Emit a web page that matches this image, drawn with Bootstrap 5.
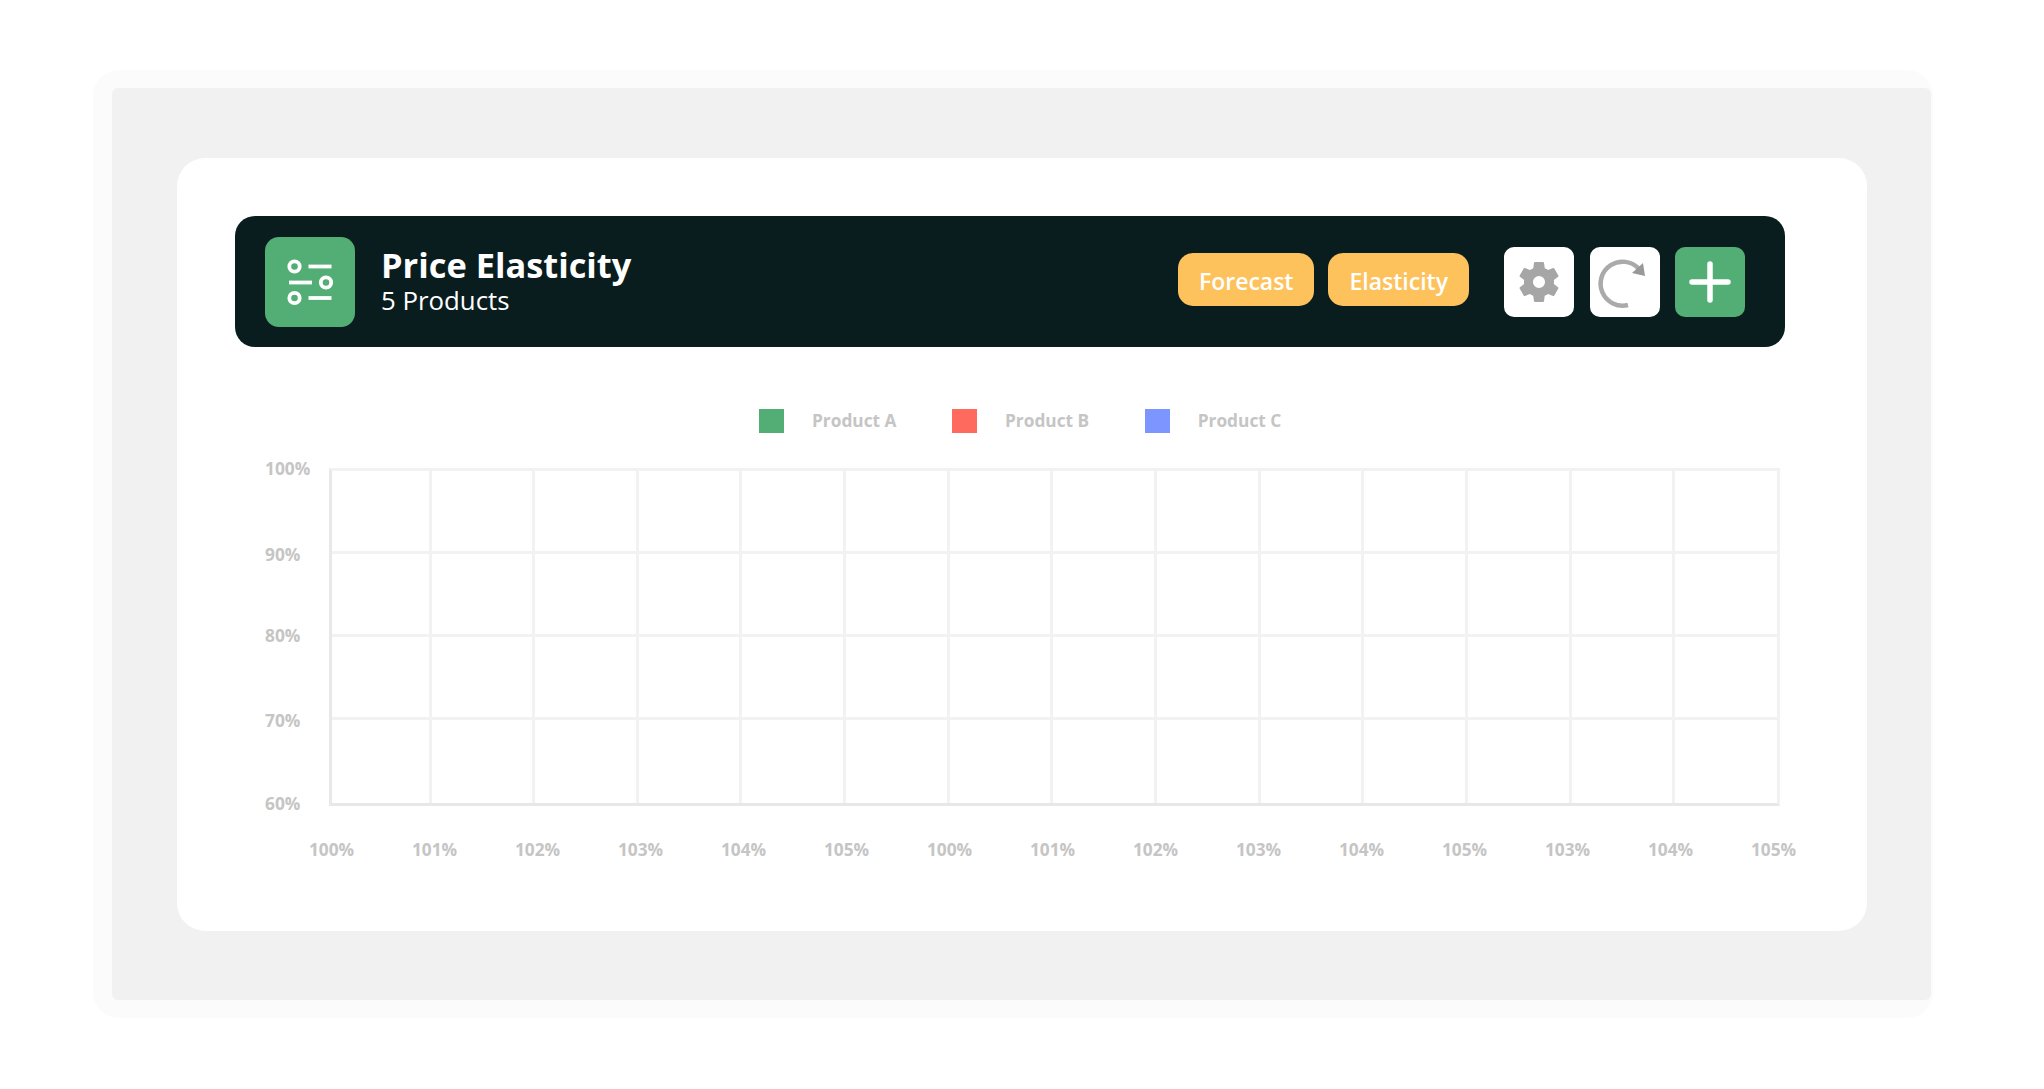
<!DOCTYPE html>
<html lang="en">
<head>
<meta charset="utf-8">
<title>Price Elasticity</title>
<link rel="stylesheet" href="https://cdn.jsdelivr.net/npm/bootstrap@5.3.0/dist/css/bootstrap.min.css">
<style>
html,body{margin:0;height:1089px;overflow:hidden;background:#fff;font-family:"Open Sans","Noto Sans",sans-serif}
.halo{margin:70px 0 0 93px;width:1840px;height:948px;padding:18px 2px 18px 19px;background:#fbfbfb;border-radius:26px}
.panel{height:100%;padding:70px 64px 69px 65px;background:#f1f1f1;border-radius:6px}
.sheet{height:100%;padding:58px 82px 0 58px;background:#fff;border-radius:28px}
.topbar{height:131px;padding:0 40px 0 30px;background:#0a1d1e;border-radius:20px;color:#fff}
.logo-box{width:90px;height:90px;background:#52ae74;border-radius:14px;margin-right:26px}
.logo-box svg{width:90px;height:90px;display:block}
.heading-stack{margin-top:1px}
.ttl{font-size:34.4px;font-weight:700;line-height:35px}
.sub{font-size:25.8px;line-height:36px}
.pill{height:53px;padding:4px 21px 0;margin-bottom:4px;border:0;border-radius:15px;background:#fec25c;color:#fff;font-size:23px;font-weight:600;line-height:49px}
.pill:hover,.pill:active{background:#fec25c!important;color:#fff!important}
.pill-gap{margin-right:14px}
.pill-end{margin-right:35px}
.tool{width:70px;height:70px;padding:0;border:0;border-radius:10px;background:#fff}
.tool svg{display:block;width:70px;height:70px}
.tool-add{background:#52ae74;margin-left:15px}
.tool-redo{margin-left:16px}
.legend-row{margin:62px 0 0 524px;height:24px;color:#c5c5c5;font-size:17.3px;font-weight:700;line-height:24px}
.legend-item{margin-right:55.5px}
.swatch{width:25px;height:24px;margin-right:28px}
.sw-a{background:#52ae74}.sw-b{background:#ff6a5f}.sw-c{background:#7d96ff}
.plot-area{margin-top:23px;margin-left:30px}
.ylabels{display:grid;grid-template-rows:86px 81px 85px 83px 24px;width:63.5px;margin-top:1px;color:#c5c5c5;font-size:17.3px;font-weight:700;line-height:24px}
.plot{margin-top:12px;width:1451px;height:338px;border-left:3px solid #e8e8e8;border-bottom:3px solid #e8e8e8;border-top:3px solid #f2f2f2;border-right:3px solid #f2f2f2;display:grid;grid-template-columns:100px repeat(12,103.65px) 1fr;grid-template-rows:83px 83px 83px 83px}
.plot span{border-right:3px solid #f2f2f2;border-bottom:3px solid #f2f2f2}
.plot span:nth-child(14n){border-right:0}
.plot span:nth-last-child(-n+14){border-bottom:0}
.xlabels{margin:22px 0 0 45px;color:#c5c5c5;font-size:17.3px;font-weight:700;line-height:24px}
.xlabels div{width:103px;flex:none;text-align:center}
</style>
</head>
<body>
<div class="halo">
  <div class="panel">
    <div class="sheet">
      <div class="topbar d-flex align-items-center">
        <div class="logo-box flex-shrink-0">
          <svg viewBox="0 0 90 90" fill="none" stroke="#fff" stroke-width="3.800" stroke-linecap="butt" aria-hidden="true">
            <circle cx="29.500" cy="29.500" r="5.200"/><path d="M43.500 29.500h23"/>
            <path d="M24 45.500h23"/><circle cx="61" cy="45.500" r="5.200"/>
            <circle cx="29.500" cy="61" r="5.200"/><path d="M43.500 61h23"/>
          </svg>
        </div>
        <div class="heading-stack">
          <div class="ttl">Price Elasticity</div>
          <div class="sub">5 Products</div>
        </div>
        <div class="ms-auto d-flex align-items-center">
          <button class="btn pill pill-gap" type="button">Forecast</button>
          <button class="btn pill pill-end" type="button">Elasticity</button>
          <button class="btn tool" type="button" aria-label="Settings">
            <svg viewBox="0 0 70 70" aria-hidden="true"><g transform="translate(10 10) scale(2.083)"><path fill="#a6a6a6" fill-rule="evenodd" d="M19.14 12.94c.04-.3.06-.61.06-.94 0-.32-.02-.64-.07-.94l2.03-1.58c.18-.14.23-.41.12-.61l-1.92-3.32c-.12-.22-.37-.29-.59-.22l-2.39.96c-.5-.38-1.03-.7-1.62-.94l-.36-2.54c-.04-.24-.24-.41-.48-.41h-3.84c-.24 0-.43.17-.47.41l-.36 2.54c-.59.24-1.13.57-1.62.94l-2.39-.96c-.22-.08-.47 0-.59.22L2.74 8.87c-.12.21-.08.47.12.61l2.03 1.58c-.05.3-.09.63-.09.94s.02.64.07.94l-2.03 1.58c-.18.14-.23.41-.12.61l1.92 3.32c.12.22.37.29.59.22l2.39-.96c.5.38 1.03.7 1.62.94l.36 2.54c.05.24.24.41.48.41h3.84c.24 0 .44-.17.47-.41l.36-2.54c.59-.24 1.13-.56 1.62-.94l2.39.96c.22.08.47 0 .59-.22l1.92-3.32c.12-.22.07-.47-.12-.61l-2.01-1.58zM12 14.9a2.9 2.9 0 1 1 0-5.8 2.9 2.9 0 0 1 0 5.8z"/></g></svg>
          </button>
          <button class="btn tool tool-redo" type="button" aria-label="Refresh">
            <svg viewBox="0 0 70 70" aria-hidden="true"><path d="M38 58A22 22 0 1 1 49 22" fill="none" stroke="#aaa" stroke-width="4.500"/><path d="M55 29L53 16 42 26z" fill="#999"/></svg>
          </button>
          <button class="btn tool tool-add" type="button" aria-label="Add">
            <svg viewBox="0 0 70 70" fill="none" stroke="#fff" stroke-width="5.500" stroke-linecap="round" aria-hidden="true"><path d="M35 17v36M17 35h36"/></svg>
          </button>
        </div>
      </div>

      <div class="legend-row d-flex align-items-center">
        <div class="legend-item d-flex align-items-center"><span class="swatch sw-a"></span>Product A</div>
        <div class="legend-item d-flex align-items-center"><span class="swatch sw-b"></span>Product B</div>
        <div class="legend-item d-flex align-items-center"><span class="swatch sw-c"></span>Product C</div>
      </div>

      <div class="plot-area d-flex">
        <div class="ylabels">
          <div>100%</div><div>90%</div><div>80%</div><div>70%</div><div>60%</div>
        </div>
        <div class="plot">
          <span></span><span></span><span></span><span></span><span></span><span></span><span></span><span></span><span></span><span></span><span></span><span></span><span></span><span></span>
          <span></span><span></span><span></span><span></span><span></span><span></span><span></span><span></span><span></span><span></span><span></span><span></span><span></span><span></span>
          <span></span><span></span><span></span><span></span><span></span><span></span><span></span><span></span><span></span><span></span><span></span><span></span><span></span><span></span>
          <span></span><span></span><span></span><span></span><span></span><span></span><span></span><span></span><span></span><span></span><span></span><span></span><span></span><span></span>
        </div>
      </div>

      <div class="xlabels d-flex">
        <div>100%</div><div>101%</div><div>102%</div><div>103%</div><div>104%</div><div>105%</div><div>100%</div><div>101%</div><div>102%</div><div>103%</div><div>104%</div><div>105%</div><div>103%</div><div>104%</div><div>105%</div>
      </div>
    </div>
  </div>
</div>
<script src="https://cdn.jsdelivr.net/npm/bootstrap@5.3.0/dist/js/bootstrap.bundle.min.js"></script>
</body>
</html>
